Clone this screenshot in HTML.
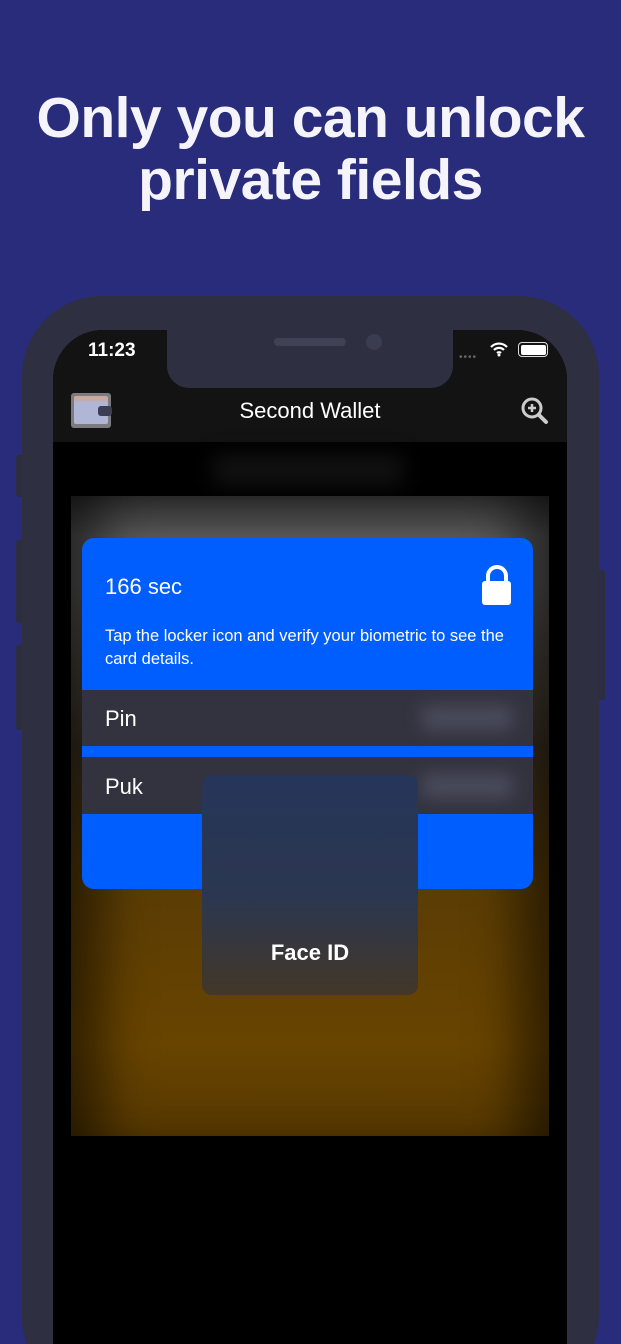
<!DOCTYPE html>
<html><head><meta charset="utf-8"><style>
*{margin:0;padding:0;box-sizing:border-box}
html,body{width:621px;height:1344px;overflow:hidden}
body{background:#292c7a;font-family:"Liberation Sans",sans-serif;position:relative}
#w{position:absolute;left:0;top:0;width:621px;height:1344px;overflow:hidden}
.a{position:absolute}
h1{position:absolute;left:0;width:621px;text-align:center;color:#f4f4fa;font-size:57px;font-weight:bold;line-height:62px;top:87px;letter-spacing:-0.5px}
</style></head><body><div id="w">
<h1>Only you can unlock<br>private fields</h1>
<div class="a" style="left:16px;top:455px;width:8px;height:42px;background:#2c2d3e;border-radius:3px"></div>
<div class="a" style="left:16px;top:540px;width:8px;height:83px;background:#2c2d3e;border-radius:3px"></div>
<div class="a" style="left:16px;top:645px;width:8px;height:85px;background:#2c2d3e;border-radius:3px"></div>
<div class="a" style="left:597px;top:570px;width:8px;height:130px;background:#2c2d3e;border-radius:3px"></div>
<div class="a" style="left:22px;top:296px;width:577px;height:1100px;background:#2e2f40;border-radius:80px"></div>
<div class="a" style="left:53px;top:330px;width:514px;height:1100px;background:#000;border-radius:50px;overflow:hidden">
  <div class="a" style="left:0;top:0;width:514px;height:112px;background:#131313"></div>
  <div class="a" style="left:114px;top:-5px;width:286px;height:63px;background:#2e2f40;border-radius:0 0 22px 22px"></div>
  <div class="a" style="left:221px;top:8px;width:72px;height:8px;background:#3f4154;border-radius:4px"></div>
  <div class="a" style="left:313px;top:4px;width:16px;height:16px;background:#3a3c50;border-radius:50%"></div>
  <div class="a" style="left:35px;top:10px;color:#fff;font-size:19px;font-weight:bold">11:23</div>
  <div class="a" style="left:406px;top:22px;color:#666;font-size:10px;letter-spacing:1px">••••</div>
  <svg class="a" style="left:436px;top:11px" width="20" height="16" viewBox="0 0 20 16"><path d="M2 6a11 11 0 0 1 16 0M5 9a7 7 0 0 1 10 0M8 12a3 3 0 0 1 4 0" stroke="#fff" stroke-width="2.2" fill="none"/><circle cx="10" cy="14" r="1.5" fill="#fff"/></svg>
  <div class="a" style="left:465px;top:12px;width:30px;height:15px;border:1.5px solid #ddd;border-radius:4px;padding:1.5px"><div style="width:100%;height:100%;background:#fff;border-radius:2px"></div></div>
  <div class="a" style="left:18px;top:63px;width:40px;height:35px;background:#7c7c80;border-radius:3px"><div style="margin:3px;height:28px;background:linear-gradient(#c9a9a0 0,#c9a9a0 4px,#b0b6d6 6px);border-radius:2px"></div><div class="a" style="left:27px;top:13px;width:14px;height:10px;background:#3b3e55;border-radius:3px"></div></div>
  <div class="a" style="left:0;top:68px;width:514px;text-align:center;color:#fff;font-size:22px">Second Wallet</div>
  <svg class="a" style="left:467px;top:66px" width="30" height="30" viewBox="0 0 30 30"><circle cx="12" cy="12" r="9" stroke="#ccc" stroke-width="3" fill="none"/><path d="M12 8v8M8 12h8" stroke="#ccc" stroke-width="2.5"/><path d="M19 19l7 7" stroke="#ccc" stroke-width="4" stroke-linecap="round"/></svg>
  <div class="a" style="left:160px;top:125px;width:190px;height:30px;background:#111;filter:blur(10px)"></div>
  <div class="a" style="left:18px;top:166px;width:478px;height:640px;background:linear-gradient(#2e2e2e 0,#555 40px,#555 90px,#3a3020 250px,#5a3c05 380px,#684400 550px,#4a3000 700px,#0d0800 780px,#000 810px)"></div>
  <div class="a" style="left:18px;top:166px;width:478px;height:640px;box-shadow:inset 60px 0 50px -30px rgba(0,0,0,.55),inset -60px 0 50px -30px rgba(0,0,0,.55)"></div>
  <div class="a" style="left:29px;top:208px;width:451px;height:351px;background:#005efe;border-radius:12px;overflow:hidden">
    <div class="a" style="left:23px;top:36px;color:#fff;font-size:22px">166 sec</div>
    <div class="a" style="left:23px;top:87px;width:415px;color:#fff;font-size:16.5px;line-height:23px">Tap the locker icon and verify your biometric to see the card details.</div>
    <svg class="a" style="left:399px;top:27px" width="32" height="42" viewBox="0 0 32 42"><path d="M7 17V11a9 9 0 0 1 18 0v6" stroke="#fff" stroke-width="4" fill="none"/><rect x="1" y="16" width="29" height="24" rx="3" fill="#fff"/></svg>
    <div class="a" style="left:0;top:152px;width:451px;height:56px;background:#333340"></div>
    <div class="a" style="left:23px;top:168px;color:#fff;font-size:22px">Pin</div>
    <div class="a" style="left:340px;top:168px;width:90px;height:24px;background:#4a4b5a;filter:blur(8px)"></div>
    <div class="a" style="left:0;top:219px;width:451px;height:57px;background:#333340"></div>
    <div class="a" style="left:23px;top:236px;color:#fff;font-size:22px">Puk</div>
    <div class="a" style="left:340px;top:236px;width:90px;height:24px;background:#4a4b5a;filter:blur(8px)"></div>
  </div>
  <div class="a" style="left:149px;top:445px;width:216px;height:220px;border-radius:10px;background:linear-gradient(#26355a 0%,#2b3750 55%,#433727 100%)"></div>
  <div class="a" style="left:149px;top:610px;width:216px;text-align:center;color:#fff;font-size:22px;font-weight:bold">Face ID</div>
</div>
</div></body></html>
